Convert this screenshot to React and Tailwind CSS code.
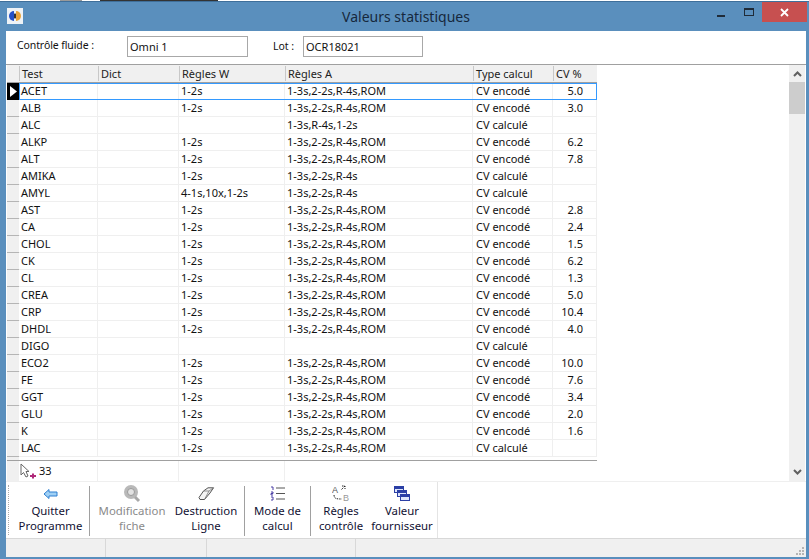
import React from "react";

const A = "1-3s,2-2s,R-4s,ROM";
const B = "1-3s,2-2s,R-4s";

const rows = [
  ["ACET", "1-2s", A, "CV encodé", "5.0"],
  ["ALB", "1-2s", A, "CV encodé", "3.0"],
  ["ALC", "", "1-3s,R-4s,1-2s", "CV calculé", ""],
  ["ALKP", "1-2s", A, "CV encodé", "6.2"],
  ["ALT", "1-2s", A, "CV encodé", "7.8"],
  ["AMIKA", "1-2s", B, "CV calculé", ""],
  ["AMYL", "4-1s,10x,1-2s", B, "CV calculé", ""],
  ["AST", "1-2s", A, "CV encodé", "2.8"],
  ["CA", "1-2s", A, "CV encodé", "2.4"],
  ["CHOL", "1-2s", A, "CV encodé", "1.5"],
  ["CK", "1-2s", A, "CV encodé", "6.2"],
  ["CL", "1-2s", A, "CV encodé", "1.3"],
  ["CREA", "1-2s", A, "CV encodé", "5.0"],
  ["CRP", "1-2s", A, "CV encodé", "10.4"],
  ["DHDL", "1-2s", A, "CV encodé", "4.0"],
  ["DIGO", "", "", "CV calculé", ""],
  ["ECO2", "1-2s", A, "CV encodé", "10.0"],
  ["FE", "1-2s", A, "CV encodé", "7.6"],
  ["GGT", "1-2s", A, "CV encodé", "3.4"],
  ["GLU", "1-2s", A, "CV encodé", "2.0"],
  ["K", "1-2s", A, "CV encodé", "1.6"],
  ["LAC", "1-2s", A, "CV calculé", ""],
];

const cols = "grid grid-cols-[12px_79px_81px_106px_188px_80px_44px]";

const ArrowIcon = () => (
  <svg width="16" height="12" viewBox="0 0 16 12">
    <path d="M1 6 L6 1.5 V4 H14 V8 H6 V10.5 Z" fill="#9fd0f5" stroke="#2f7fd0" strokeWidth="1" />
  </svg>
);

const SearchIcon = () => (
  <svg width="18" height="19" viewBox="0 0 18 19">
    <circle cx="8" cy="8" r="7" fill="#b9b9b9" />
    <circle cx="8" cy="8" r="3.5" fill="#e2e2e2" stroke="#9a9a9a" />
    <path d="M12 13 L16 17" stroke="#a8a8a8" strokeWidth="3" />
  </svg>
);

const EraserIcon = () => (
  <svg width="17" height="14" viewBox="0 0 17 14">
    <path d="M5.5 4 L10 0.8 H15.5 L12 6 L6.5 12.5 H2 L1 10.5 Z" fill="#f4f4f4" stroke="#555" />
    <path d="M5.5 4 H11 L15.5 0.8 M11 4 L6.5 12.5" fill="none" stroke="#777" strokeWidth="0.8" />
  </svg>
);

const ListIcon = () => (
  <svg width="16" height="15" viewBox="0 0 16 15">
    <path d="M1 1 H3 V4 M1 6 H3 V7.5 H1 V9 H3 M1 11 H3 V14 H1" fill="none" stroke="#4a3fa5" strokeWidth="1" />
    <path d="M6 2 H15 M6 7.5 H15 M6 13 H15" stroke="#555" strokeWidth="1" />
  </svg>
);

const RulesIcon = () => (
  <svg width="18" height="17" viewBox="0 0 18 17">
    <text x="0" y="8" fontSize="9" fill="#555" fontFamily="Liberation Sans">A</text>
    <text x="11" y="16" fontSize="9" fill="#999" fontFamily="Liberation Sans">B</text>
    <path d="M2 10 C2 14 5 14 10 14 M10 1 L13 1 L13 4 M13 1 L9 5" fill="none" stroke="#222" strokeWidth="1" strokeDasharray="1.5 1" />
  </svg>
);

const WindowsIcon = () => (
  <svg width="16" height="15" viewBox="0 0 16 15">
    <rect x="0.5" y="0.5" width="9" height="6" fill="#dfe6fb" stroke="#2b3fa5" />
    <rect x="3.5" y="4.5" width="9" height="6" fill="#dfe6fb" stroke="#2b3fa5" />
    <rect x="6.5" y="8.5" width="9" height="6" fill="#dfe6fb" stroke="#2b3fa5" />
    <path d="M1 2 H9 M4 6 H12 M7 10 H15" stroke="#2b3fa5" strokeWidth="2" />
  </svg>
);

const CursorIcon = () => (
  <svg width="17" height="16" viewBox="0 0 17 16">
    <path d="M1 1 V12 L3.5 9.5 L6 14 L8 13 L6 8.5 H9 Z" fill="#fff" stroke="#666" />
    <path d="M10 13 H16 M13 10.5 V15.5" stroke="#b02a7a" strokeWidth="2" />
  </svg>
);

const ToolButton = ({ icon, lines, width, disabled }) => (
  <div className={`flex flex-col items-center ${width} ${disabled ? "text-[#8a8a8a]" : "text-[#111133]"}`}>
    <div className="h-[19px] mt-[2px] flex items-center justify-center">{icon}</div>
    <div className="text-[11.4px] leading-[15px] text-center whitespace-nowrap">
      {lines.map((l) => (
        <div key={l}>{l}</div>
      ))}
    </div>
  </div>
);

const Sep = () => <div className="w-px h-[50px] mt-[4px] bg-[#a0a0a0]" />;

export default function App() {
  return (
    <div className="w-[809px] h-[559px] flex flex-col bg-[#5a8fbd] overflow-hidden font-['Noto_Sans',sans-serif] text-[11px] text-[#111]">
      <div className="h-[1px] bg-white flex items-center pl-[60px]">
        <div className="w-[22px] h-px bg-[#999]" />
        <div className="w-[118px] h-px bg-[#333] ml-[18px]" />
      </div>
      <div className="h-px bg-[#3f6f9a]" />

      {/* barre de titre */}
      <div className="h-[29px] flex items-start">
        <div className="w-[7px]" />
        <svg width="16" height="16" viewBox="0 0 16 16" className="mt-[6px]">
          <rect width="16" height="16" fill="#eef2f6" />
          <circle cx="8" cy="8" r="2.5" fill="#333" />
          <path d="M7 3 A5 5 0 0 0 7 13 Z" fill="#2450c8" />
          <path d="M9 3 A5 5 0 0 1 9 13 Z" fill="#e8a23a" />
        </svg>
        <div className="flex-1 text-center text-[14px] leading-[29px] text-[#16283c] pl-[72px]">Valeurs statistiques</div>
        <svg width="10" height="4" viewBox="0 0 10 4" className="mt-[12px] mr-[17px]">
          <rect width="8" height="2" y="1" fill="#1f2b38" />
        </svg>
        <svg width="11" height="9" viewBox="0 0 11 9" className="mt-[6px] mr-[7px]">
          <rect x="0.5" y="0.5" width="9" height="7" fill="none" stroke="#1f2b38" />
          <rect x="0" y="0" width="10" height="2" fill="#1f2b38" />
        </svg>
        <div className="w-[45px] h-[20px] bg-[#c75050] flex items-center justify-center text-white mr-[2px]">
          <svg width="9" height="9" viewBox="0 0 9 9">
            <path d="M1 1 L8 8 M8 1 L1 8" stroke="#fff" strokeWidth="1.8" />
          </svg>
        </div>
      </div>

      {/* contenu */}
      <div className="ml-[6px] mr-[3px] h-[526px] bg-white flex flex-col">
        <div className="h-[33px] pb-[2px] flex items-center">
          <div className="ml-[11px] w-[110px] text-[10.5px] tracking-[-0.1px] relative -top-px">Contrôle fluide :</div>
          <div className="w-[121px] h-[21px] border border-[#a8a8a8] pl-[2px] leading-[20px]">Omni 1</div>
          <div className="ml-[25px] w-[30px] text-[10.5px]">Lot :</div>
          <div className="w-[120px] h-[21px] border border-[#a8a8a8] pl-[2px] leading-[20px]">OCR18021</div>
        </div>

        <div className="flex flex-1 min-h-0 border-t border-[#a0a0a0] pl-[1px]">
          <div className="w-[590px] flex flex-col">
            <div className={`${cols} h-[18px] bg-[#f0f0f0] border-b border-[#a0a0a0]`}>
              <div />
              {["Test", "Dict", "Règles W", "Règles A", "Type calcul", "CV %"].map((h) => (
                <div key={h} className="border-l border-[#c8c8c8] pl-[2px] leading-[17px] h-[15px] mt-[1px] text-[#222]">
                  <span className="relative top-[-1px]">{h}</span>
                </div>
              ))}
            </div>

            <div className="relative">
              {rows.map((r, i) => (
                <div key={r[0]} className={`${cols} h-[17px] leading-[16px]`}>
                  {i === 0 ? (
                    <div className="bg-black flex items-center justify-center">
                      <svg width="7" height="11" viewBox="0 0 7 11">
                        <path d="M0 0 L7 5.5 L0 11 Z" fill="#fff" />
                      </svg>
                    </div>
                  ) : (
                    <div className="bg-[#f0f0f0] border-b border-[#b5b5b5]" />
                  )}
                  <div className="border-b border-r border-[#efefef] pl-[2px]">{r[0]}</div>
                  <div className="border-b border-r border-[#efefef]" />
                  <div className="border-b border-r border-[#efefef] pl-[2px]">{r[1]}</div>
                  <div className="border-b border-r border-[#efefef] pl-[2px]">{r[2]}</div>
                  <div className="border-b border-r border-[#efefef] pl-[3px]">{r[3]}</div>
                  <div className="border-b border-r border-[#efefef] text-right pr-[13px]">{r[4]}</div>
                </div>
              ))}
              <div className="absolute left-[12px] top-0 w-[578px] h-[17px] shadow-[inset_0_0_0_1px_#3399ff]" />
            </div>

            <div className={`${cols} h-[5px] border-b border-[#a0a0a0]`}>
              <div className="bg-[#f0f0f0]" />
            </div>
            <div className={`${cols} h-[20px]`}>
              <div className="bg-[#f0f0f0]" />
              <div className="border-r border-[#efefef] flex items-center pl-[1px] gap-[2px]">
                <CursorIcon />
                <span>33</span>
              </div>
              <div className="border-r border-[#efefef]" />
              <div className="border-r border-[#efefef]" />
            </div>
          </div>

          <div className="flex-1" />

          {/* ascenseur */}
          <div className="w-[16px] h-[416px] bg-[#f0f0f0] flex flex-col items-center mr-[1px]">
            <svg width="9" height="6" viewBox="0 0 9 6" className="mt-[6px]">
              <path d="M1 5 L4.5 1.5 L8 5" fill="none" stroke="#606060" strokeWidth="2" />
            </svg>
            <div className="w-full h-[32px] mt-[5px] bg-[#cdcdcd]" />
            <div className="flex-1" />
            <svg width="9" height="6" viewBox="0 0 9 6" className="mb-[6px]">
              <path d="M1 1 L4.5 4.5 L8 1" fill="none" stroke="#606060" strokeWidth="2" />
            </svg>
          </div>
        </div>

        {/* barre d'outils */}
        <div className="h-[57px] flex border-t border-[#efefef]">
          <div className="w-[432px] bg-white flex border-r border-[#e4e4e4] pl-[2px]">
            <div className="w-px h-[50px] mt-[3px] mr-[3px] border-l border-dotted border-[#aaa]" />
            <ToolButton icon={<ArrowIcon />} lines={["Quitter", "Programme"]} width="w-[77px]" />
            <Sep />
            <ToolButton icon={<SearchIcon />} lines={["Modification", "fiche"]} width="w-[84px]" disabled />
            <ToolButton icon={<EraserIcon />} lines={["Destruction", "Ligne"]} width="w-[64px] mr-[6px]" />
            <Sep />
            <ToolButton icon={<ListIcon />} lines={["Mode de", "calcul"]} width="w-[65px]" />
            <Sep />
            <ToolButton icon={<RulesIcon />} lines={["Règles", "contrôle"]} width="w-[60px]" />
            <ToolButton icon={<WindowsIcon />} lines={["Valeur", "fournisseur"]} width="w-[62px]" />
          </div>
        </div>

        {/* barre d'état */}
        <div className="h-[19px] bg-[#f0f0f0] border-t border-[#d8d8d8] flex relative">
          <div className="w-[100px] border-r border-[#d8d8d8]" />
          <div className="w-[101px] border-r border-[#d8d8d8]" />
          <div className="w-[149px] border-r border-[#d8d8d8]" />
          <div className="flex-1" />
          <svg width="9" height="9" viewBox="0 0 9 9" className="absolute right-[1px] bottom-[1px]">
            <path d="M6 0h2v2H6zM3 3h2v2H3zM6 3h2v2H6zM0 6h2v2H0zM3 6h2v2H3zM6 6h2v2H6z" fill="#b5b5b5" />
          </svg>
        </div>
      </div>
    </div>
  );
}
